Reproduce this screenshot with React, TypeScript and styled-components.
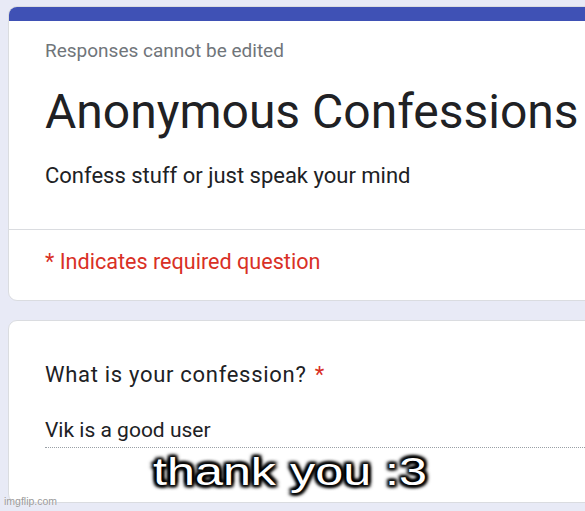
import styled, { createGlobalStyle } from 'styled-components'

const GlobalStyle = createGlobalStyle`
  html, body {
    margin: 0;
    padding: 0;
    background: #e8eaf6;
    overflow: hidden;
  }
  body {
    font-family: Roboto, "Noto Sans", Arial, sans-serif;
    color: #202124;
  }
`

const Page = styled.div`
  position: relative;
  width: 585px;
  height: 511px;
  overflow: hidden;
  padding: 6px 0 0 8px;
  box-sizing: border-box;
  display: flex;
  flex-direction: column;
  gap: 19px;
`

const Card = styled.section`
  width: 640px;
  flex-shrink: 0;
  background: #fff;
  border: 1px solid #dadce0;
  border-radius: 9px;
  overflow: hidden;
  box-sizing: border-box;
`

const Band = styled.div`
  height: 15px;
  margin: -1px -1px 0;
  background: #3f51b5;
`

const Block = styled.div<{ $top: number; $bottom: number }>`
  padding: ${p => p.$top}px 36px ${p => p.$bottom}px;
`

const Notice = styled.div`
  font-size: 19px;
  line-height: 24px;
  color: #70757a;
`

const Title = styled.h1`
  margin: 21px 0 0;
  font-size: 48px;
  line-height: 56px;
  font-weight: 400;
  color: #202124;
`

const Description = styled.p`
  margin: 22px 0 0;
  font-size: 22px;
  line-height: 28px;
`

const Divider = styled.hr`
  margin: 0;
  border: 0;
  border-top: 1px solid #dadce0;
`

const Required = styled.div`
  font-size: 21.6px;
  line-height: 28px;
  color: #d93025;
`

const Question = styled.div`
  font-size: 22px;
  line-height: 28px;
  letter-spacing: 0.7px;
`

const Star = styled.span`
  margin-left: 2px;
  color: #d93025;
`

const Answer = styled.div`
  margin-top: 27px;
  padding-bottom: 3px;
  font-size: 21px;
  line-height: 28px;
  border-bottom: 1px dotted #9aa0a6;
`

const Caption = styled.div`
  position: absolute;
  left: 290px;
  top: 448px;
  transform: translateX(-50%) scaleX(1.29);
  font-family: "Liberation Sans", Arial, sans-serif;
  font-size: 39px;
  line-height: 48px;
  color: #fff;
  white-space: nowrap;
  text-shadow:
    0 0 2px #000,
    0 0 3px #000,
    2px 2px 3px #000,
    -2px -2px 3px #000,
    2px -2px 3px #000,
    -2px 2px 3px #000,
    0 2px 3px #000,
    0 -2px 3px #000;
`

const Watermark = styled.div`
  position: absolute;
  left: 4px;
  bottom: 4px;
  font-family: "Liberation Sans", Arial, sans-serif;
  font-size: 10.5px;
  line-height: 12px;
  color: #9a9a9a;
  text-shadow: 0 0 1px #fff;
`

export default function App() {
  return (
    <Page>
      <GlobalStyle />
      <Card>
        <Band />
        <Block $top={18} $bottom={39}>
          <Notice>Responses cannot be edited</Notice>
          <Title>Anonymous Confessions</Title>
          <Description>Confess stuff or just speak your mind</Description>
        </Block>
        <Divider />
        <Block $top={18} $bottom={24}>
          <Required>* Indicates required question</Required>
        </Block>
      </Card>
      <Card>
        <Block $top={40} $bottom={54}>
          <Question>
            What is your confession? <Star>*</Star>
          </Question>
          <Answer>Vik is a good user</Answer>
        </Block>
      </Card>
      <Caption>thank you :3</Caption>
      <Watermark>imgflip.com</Watermark>
    </Page>
  )
}
